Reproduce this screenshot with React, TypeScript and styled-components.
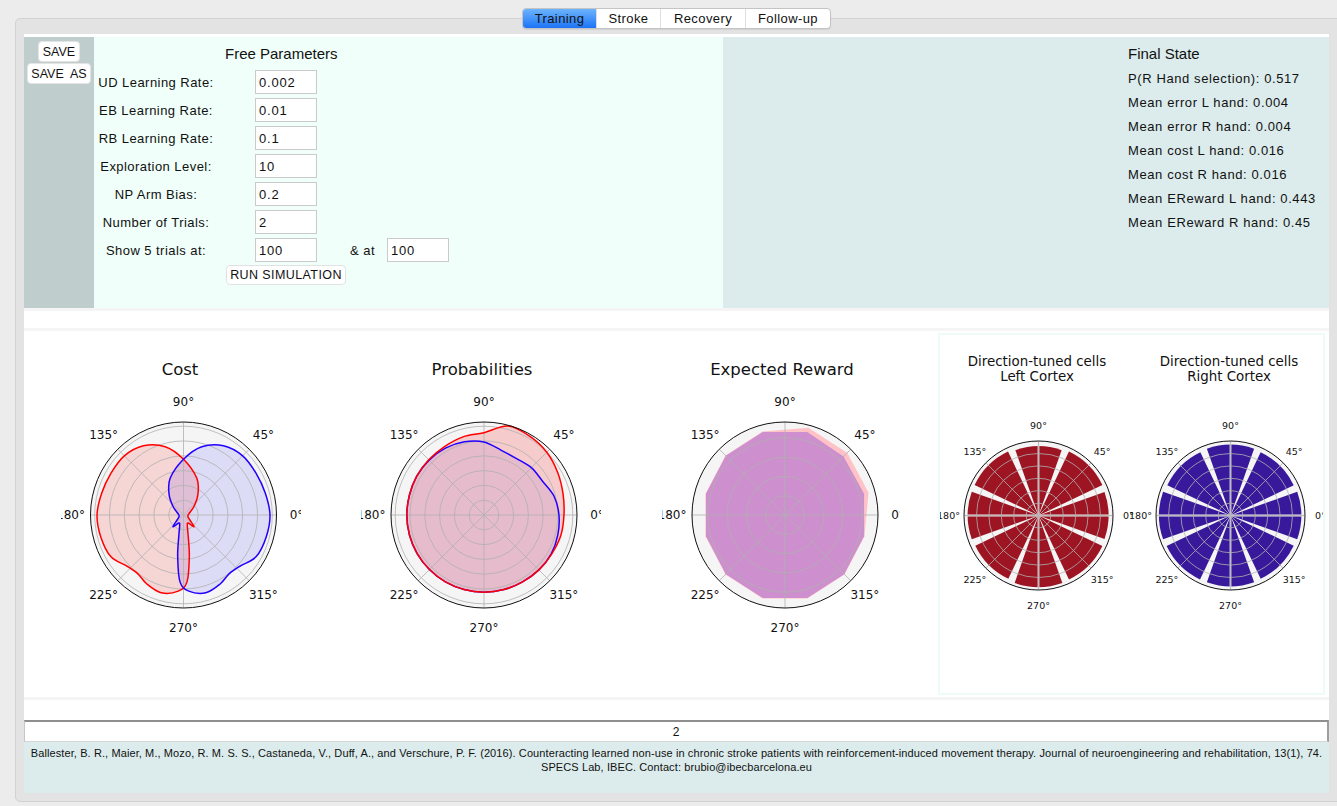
import React from "react";
import styled, { createGlobalStyle, css } from "styled-components";

const GlobalStyle = createGlobalStyle`
  html, body {
    margin: 0;
    padding: 0;
    background: #ececec;
    overflow: hidden;
  }
  body {
    font-family: "Liberation Sans", Arial, sans-serif;
    font-size: 13px;
    color: #111;
  }
  * { box-sizing: border-box; }
`;

const Window = styled.div`
  width: 1337px;
  height: 806px;
  padding-left: 15px;
  display: flex;
  flex-direction: column;
`;

// tab switcher sits over the top border of the pane
const TabBar = styled.div`
  position: relative;
  z-index: 1;
  display: flex;
  justify-content: center;
  width: 1330px;
  padding: 8px 16px 0 9px;
  margin-bottom: -11px;
`;

const Segmented = styled.div`
  display: flex;
  height: 21px;
  border: 1px solid #c4c4c4;
  border-radius: 4px;
  background: #fff;
  overflow: hidden;
  box-shadow: 0 1px 1px rgba(0, 0, 0, 0.08);
`;

const Tab = styled.div<{ $active?: boolean; $w: number }>`
  width: ${(p) => p.$w}px;
  display: flex;
  align-items: center;
  justify-content: center;
  font-size: 13px;
  letter-spacing: 0.4px;
  color: #111;
  border-left: 1px solid #dedede;
  &:first-child {
    border-left: none;
  }
  ${(p) =>
    p.$active &&
    css`
      background: linear-gradient(#6db4fd, #1c74f6);
    `}
`;

const Pane = styled.div`
  width: 1330px;
  background: #e3e3e3;
  border: 1px solid #d2d2d2;
  border-radius: 5px;
  padding: 15px 15px 8px 8px;
`;

const Content = styled.div`
  width: 1305px;
  background: #fff;
  padding-top: 3px;
  display: flex;
  flex-direction: column;
`;

const TopRow = styled.div`
  display: flex;
  height: 274px;
  border-bottom: 3px solid #f5f5f5;
`;

const SideStrip = styled.div`
  width: 70px;
  background: #bfcecd;
  display: flex;
  flex-direction: column;
  align-items: center;
  padding-top: 4px;
  gap: 1px;
`;

const SmallButton = styled.button<{ $w: number }>`
  width: ${(p) => p.$w}px;
  height: 21px;
  padding: 0;
  background: #fff;
  border: 1px solid #e4e4e4;
  border-radius: 4px;
  font-family: "Liberation Sans", Arial, sans-serif;
  font-size: 12.5px;
  color: #111;
`;

const ParamsPanel = styled.div`
  width: 629px;
  background: #f0fff9;
  padding-top: 8px;
`;

const PanelTitle = styled.div<{ $indent: number }>`
  font-size: 15px;
  line-height: 18px;
  margin-left: ${(p) => p.$indent}px;
  color: #111;
`;

const ParamGrid = styled.div`
  display: grid;
  grid-template-columns: 124px 37px 62px 70px 62px;
  grid-auto-rows: 24px;
  row-gap: 4px;
  align-items: center;
  margin-top: 7px;
`;

const ParamLabel = styled.div`
  grid-column: 1;
  text-align: center;
  font-size: 13px;
  letter-spacing: 0.45px;
  white-space: nowrap;
`;

const ParamInput = styled.input<{ $col: number }>`
  grid-column: ${(p) => p.$col};
  width: 62px;
  height: 24px;
  border: 1px solid #cacaca;
  background: #fff;
  padding: 0 3px;
  font-family: "Liberation Sans", Arial, sans-serif;
  font-size: 13px;
  letter-spacing: 0.8px;
  color: #111;
  outline: none;
`;

const AndLabel = styled.div`
  grid-column: 4;
  text-align: right;
  padding-right: 12px;
  font-size: 13px;
  letter-spacing: 0.5px;
`;

const RunButton = styled.button`
  grid-column: 3;
  justify-self: center;
  align-self: start;
  margin-top: -1px;
  width: 120px;
  height: 20px;
  padding: 0;
  white-space: nowrap;
  background: #fff;
  border: 1px solid #e2e2e2;
  border-radius: 4px;
  font-family: "Liberation Sans", Arial, sans-serif;
  font-size: 12.5px;
  letter-spacing: 0.4px;
  color: #111;
`;

const StatePanel = styled.div`
  flex: 1;
  background: #dcecec;
  padding: 8px 0 0 405px;
`;

const StateList = styled.div`
  margin-top: 4px;
`;

const StateLine = styled.div`
  font-size: 13px;
  letter-spacing: 0.6px;
  line-height: 24px;
  white-space: nowrap;
`;

const Spacer = styled.div<{ $h: number }>`
  height: ${(p) => p.$h}px;
`;

const ChartArea = styled.div`
  display: flex;
  align-items: stretch;
  height: 372px;
  padding-left: 7px;
  border-top: 3px solid #f5f5f5;
  border-bottom: 3px solid #f5f5f5;
`;

const ChartCell = styled.div`
  width: 300px;
  display: flex;
  justify-content: center;
  padding-top: 10px;
`;

const CellPanel = styled.div`
  flex: 1;
  margin: 2px 4px 2px 7px;
  border: 2px solid #eefcf7;
  display: flex;
  overflow: hidden;
`;

const PlotSvg = styled.svg<{ $clip?: boolean }>`
  display: block;
  flex: none;
  overflow: ${(p) => (p.$clip ? "hidden" : "visible")};
  font-family: "DejaVu Sans", "Liberation Sans", sans-serif;
`;

const NumberBox = styled.div`
  height: 22px;
  border-top: 2px solid #8e8e8e;
  border-right: 2px solid #9e9e9e;
  border-left: 1px solid #c6c6c6;
  border-bottom: 1px solid #d6d6d6;
  display: flex;
  align-items: center;
  justify-content: center;
  font-size: 12px;
`;

const Citation = styled.div`
  height: 51px;
  background: #dcecec;
  padding-top: 4px;
  text-align: center;
  font-size: 11px;
  letter-spacing: 0.1px;
  line-height: 14px;
  color: #111;
  white-space: nowrap;
`;

/* ---------- polar plot helpers ---------- */

type P = [number, number];

const rad = (d: number) => (d * Math.PI) / 180;
const pt = (cx: number, cy: number, r: number, deg: number): P => [
  cx + r * Math.cos(rad(deg)),
  cy - r * Math.sin(rad(deg)),
];

// closed catmull-rom spline through polar control points
const smoothPath = (cx: number, cy: number, R: number, ctrl: P[]) => {
  const pts = ctrl.map(([a, f]) => pt(cx, cy, f * R, a));
  const n = pts.length;
  let d = `M${pts[0][0].toFixed(2)},${pts[0][1].toFixed(2)}`;
  for (let i = 0; i < n; i++) {
    const p0 = pts[(i - 1 + n) % n];
    const p1 = pts[i];
    const p2 = pts[(i + 1) % n];
    const p3 = pts[(i + 2) % n];
    const c1 = [p1[0] + (p2[0] - p0[0]) / 6, p1[1] + (p2[1] - p0[1]) / 6];
    const c2 = [p2[0] - (p3[0] - p1[0]) / 6, p2[1] - (p3[1] - p1[1]) / 6];
    d += ` C${c1[0].toFixed(2)},${c1[1].toFixed(2)} ${c2[0].toFixed(2)},${c2[1].toFixed(2)} ${p2[0].toFixed(2)},${p2[1].toFixed(2)}`;
  }
  return d + "Z";
};

const polygonPath = (cx: number, cy: number, R: number, ctrl: P[]) =>
  ctrl
    .map(([a, f], i) => {
      const [x, y] = pt(cx, cy, f * R, a);
      return `${i ? "L" : "M"}${x.toFixed(2)},${y.toFixed(2)}`;
    })
    .join(" ") + "Z";

const sectorPath = (cx: number, cy: number, r: number, a1: number, a2: number) => {
  const [x1, y1] = pt(cx, cy, r, a1);
  const [x2, y2] = pt(cx, cy, r, a2);
  return `M${cx},${cy} L${x1.toFixed(2)},${y1.toFixed(2)} A${r},${r} 0 0 0 ${x2.toFixed(2)},${y2.toFixed(2)}Z`;
};

const mirror = (ctrl: P[]): P[] =>
  ctrl
    .map(([a, f]) => [((180 - a) % 360 + 360) % 360, f] as P)
    .sort((p, q) => p[0] - q[0]);

// same angles every 15 degrees, so shared values give the same curve
const every15 = (vals: number[]): P[] => vals.map((f, i) => [i * 15, f]);

const ANGLES = [0, 45, 90, 135, 180, 225, 270, 315];

interface PolarProps {
  w: number;
  h: number;
  cx: number;
  cy: number;
  r: number;
  labelR: number;
  labelSize: number;
  rings: number;
  ringStep: number;
  title: string[];
  titleX: number;
  titleY: number;
  titleSize: number;
  clip?: boolean;
  under?: React.ReactNode;
  over?: React.ReactNode;
}

const PolarPlot = (props: PolarProps) => {
  const { w, h, cx, cy, r, labelR, labelSize, rings, ringStep, title, titleX, titleY, titleSize } = props;
  return (
    <PlotSvg width={w} height={h} viewBox={`0 0 ${w} ${h}`} $clip={props.clip}>
      {title.map((t, i) => (
        <text
          key={t}
          x={titleX}
          y={titleY + i * 15}
          textAnchor="middle"
          fontSize={titleSize}
          fill="#111"
        >
          {t}
        </text>
      ))}
      <circle cx={cx} cy={cy} r={r} fill="#f5f5f5" />
      {props.under}
      {Array.from({ length: rings }, (_, i) => (
        <circle
          key={i}
          cx={cx}
          cy={cy}
          r={(i + 1) * ringStep}
          fill="none"
          stroke="#b0b0b0"
          strokeWidth={0.8}
        />
      ))}
      {ANGLES.map((a) => {
        const [x, y] = pt(cx, cy, r, a);
        return <line key={a} x1={cx} y1={cy} x2={x} y2={y} stroke="#b0b0b0" strokeWidth={0.8} />;
      })}
      {props.over}
      <circle cx={cx} cy={cy} r={r} fill="none" stroke="#111" strokeWidth={1} />
      {ANGLES.map((a) => {
        const [x, y] = pt(cx, cy, labelR, a);
        return (
          <text
            key={a}
            x={x}
            y={y}
            textAnchor="middle"
            dominantBaseline="central"
            fontSize={labelSize}
            fill="#111"
          >
            {a}°
          </text>
        );
      })}
    </PlotSvg>
  );
};

/* ---------- data ---------- */

const costRed: P[] = [
  [0, 0.05], [20, 0.07], [40, 0.15], [55, 0.27], [70, 0.42], [90, 0.6],
  [105, 0.76], [120, 0.86], [135, 0.9], [150, 0.9], [165, 0.91], [180, 0.93],
  [195, 0.92], [210, 0.9], [222, 0.82], [232, 0.8], [242, 0.84], [254, 0.87],
  [266, 0.82], [273, 0.72], [278, 0.45], [283, 0.22], [290, 0.12], [300, 0.1],
  [312, 0.17], [324, 0.08], [342, 0.05],
];
const costBlue = mirror(costRed);

const probRed = every15([
  0.86, 0.88, 0.915, 0.955, 0.98, 0.99, 0.885, 0.87, 0.85, 0.84, 0.835, 0.83,
  0.83, 0.83, 0.83, 0.83, 0.83, 0.83, 0.83, 0.83, 0.83, 0.835, 0.84, 0.855,
]);
const probBlue = every15([
  0.806, 0.78, 0.727, 0.72, 0.7, 0.72, 0.785, 0.815, 0.83, 0.835, 0.835, 0.83,
  0.83, 0.83, 0.83, 0.83, 0.83, 0.83, 0.83, 0.83, 0.83, 0.835, 0.835, 0.822,
]);

const erBlueR = [0.88, 0.89, 0.925, 0.925, 0.9, 0.88, 0.88, 0.9, 0.925, 0.925, 0.9, 0.88];
const erRedR = [0.93, 0.945, 0.97, 0.93, 0.905, 0.885, 0.885, 0.905, 0.93, 0.93, 0.905, 0.885];
const erBlue: P[] = erBlueR.map((f, i) => [15 + i * 30, f]);
const erRed: P[] = erRedR.map((f, i) => [15 + i * 30, f]);

const cellsLeft = [0.94, 0.95, 0.93, 0.95, 0.95, 0.94, 0.96, 0.95];
const cellsRight = [0.95, 0.94, 0.95, 0.94, 0.96, 0.95, 0.95, 0.94];

const params: [string, string][] = [
  ["UD Learning Rate:", "0.002"],
  ["EB Learning Rate:", "0.01"],
  ["RB Learning Rate:", "0.1"],
  ["Exploration Level:", "10"],
  ["NP Arm Bias:", "0.2"],
  ["Number of Trials:", "2"],
];

const finalState = [
  "P(R Hand selection): 0.517",
  "Mean error L hand: 0.004",
  "Mean error R hand: 0.004",
  "Mean cost L hand: 0.016",
  "Mean cost R hand: 0.016",
  "Mean EReward L hand: 0.443",
  "Mean EReward R hand: 0.45",
];

const MAIN = { w: 240, h: 300, cy: 174, r: 93, labelR: 113, labelSize: 12, titleY: 34, titleSize: 16.5 };

const CostChart = () => {
  const cx = 122.5;
  return (
    <PolarPlot
      {...MAIN}
      cx={cx}
      rings={6}
      ringStep={14.8}
      title={["Cost"]}
      titleX={119}
      clip
      under={
        <>
          <path d={smoothPath(cx, MAIN.cy, MAIN.r, costBlue)} fill="rgba(0,0,255,0.1)" />
          <path d={smoothPath(cx, MAIN.cy, MAIN.r, costRed)} fill="rgba(255,0,0,0.13)" />
        </>
      }
      over={
        <>
          <path d={smoothPath(cx, MAIN.cy, MAIN.r, costRed)} fill="none" stroke="#ff0000" strokeWidth={1.5} />
          <path d={smoothPath(cx, MAIN.cy, MAIN.r, costBlue)} fill="none" stroke="#2200ff" strokeWidth={1.5} />
        </>
      }
    />
  );
};

const ProbChart = () => {
  const cx = 123;
  return (
    <PolarPlot
      {...MAIN}
      cx={cx}
      rings={6}
      ringStep={14.8}
      title={["Probabilities"]}
      titleX={121}
      clip
      under={
        <>
          <path d={smoothPath(cx, MAIN.cy, MAIN.r, probBlue)} fill="rgba(0,0,255,0.08)" />
          <path d={smoothPath(cx, MAIN.cy, MAIN.r, probRed)} fill="rgba(255,0,0,0.17)" />
        </>
      }
      over={
        <>
          <path d={smoothPath(cx, MAIN.cy, MAIN.r, probBlue)} fill="none" stroke="#2200ff" strokeWidth={1.5} />
          <path d={smoothPath(cx, MAIN.cy, MAIN.r, probRed)} fill="none" stroke="#ff0000" strokeWidth={1.5} />
        </>
      }
    />
  );
};

const RewardChart = () => {
  const cx = 123;
  return (
    <PolarPlot
      {...MAIN}
      w={238}
      cx={cx}
      rings={4}
      ringStep={19.3}
      title={["Expected Reward"]}
      titleX={120}
      clip
      under={
        <>
          <path d={polygonPath(cx, MAIN.cy, MAIN.r, erRed)} fill="#fec2c7" />
          <path d={polygonPath(cx, MAIN.cy, MAIN.r, erBlue)} fill="#cd8fcd" />
        </>
      }
    />
  );
};

const CellsChart = ({ side, color, radii }: { side: string; color: string; radii: number[] }) => {
  const cx = 98.5;
  const cy = 180.5;
  const r = 74.5;
  return (
    <PolarPlot
      w={192}
      h={358}
      cx={cx}
      cy={cy}
      r={r}
      labelR={90}
      labelSize={9.5}
      rings={5}
      ringStep={12.4}
      title={["Direction-tuned cells", `${side} Cortex`]}
      titleX={97}
      titleY={31}
      titleSize={13.4}
      under={
        <>
          {radii.map((f, i) => (
            <path key={i} d={sectorPath(cx, cy, f * r, i * 45 - 19.5, i * 45 + 19.5)} fill={color} />
          ))}
          <line x1={cx - r} y1={cy} x2={cx + r} y2={cy} stroke="#e8e8e8" strokeWidth={1.8} />
          <line x1={cx} y1={cy - r} x2={cx} y2={cy + r} stroke="#e8e8e8" strokeWidth={1.8} />
        </>
      }
    />
  );
};

export default function App() {
  return (
    <Window>
      <GlobalStyle />
      <TabBar>
        <Segmented>
          <Tab $w={73} $active>
            Training
          </Tab>
          <Tab $w={64}>Stroke</Tab>
          <Tab $w={85}>Recovery</Tab>
          <Tab $w={85}>Follow-up</Tab>
        </Segmented>
      </TabBar>

      <Pane>
        <Content>
          <TopRow>
            {/* save buttons */}
            <SideStrip>
              <SmallButton $w={42}>SAVE</SmallButton>
              <SmallButton $w={64}>SAVE&nbsp; AS</SmallButton>
            </SideStrip>

            {/* parameters form */}
            <ParamsPanel>
              <PanelTitle $indent={131}>Free Parameters</PanelTitle>
              <ParamGrid>
                {params.map(([label, value]) => (
                  <React.Fragment key={label}>
                    <ParamLabel>{label}</ParamLabel>
                    <ParamInput $col={3} defaultValue={value} />
                  </React.Fragment>
                ))}
                <ParamLabel>Show 5 trials at:</ParamLabel>
                <ParamInput $col={3} defaultValue="100" />
                <AndLabel>&amp; at</AndLabel>
                <ParamInput $col={5} defaultValue="100" />
                <RunButton>RUN SIMULATION</RunButton>
              </ParamGrid>
            </ParamsPanel>

            {/* results */}
            <StatePanel>
              <PanelTitle $indent={0}>Final State</PanelTitle>
              <StateList>
                {finalState.map((s) => (
                  <StateLine key={s}>{s}</StateLine>
                ))}
              </StateList>
            </StatePanel>
          </TopRow>

          <Spacer $h={17} />

          <ChartArea>
            <ChartCell>
              <CostChart />
            </ChartCell>
            <ChartCell>
              <ProbChart />
            </ChartCell>
            <ChartCell>
              <RewardChart />
            </ChartCell>
            <CellPanel>
              <CellsChart side="Left" color="#9d1422" radii={cellsLeft} />
              <CellsChart side="Right" color="#38199b" radii={cellsRight} />
            </CellPanel>
          </ChartArea>

          <Spacer $h={20} />

          <NumberBox>2</NumberBox>
          <Citation>
            Ballester, B. R., Maier, M., Mozo, R. M. S. S., Castaneda, V., Duff, A., and Verschure, P. F. (2016).
            Counteracting learned non-use in chronic stroke patients with reinforcement-induced movement therapy.
            Journal of neuroengineering and rehabilitation, 13(1), 74.
            <br />
            SPECS Lab, IBEC. Contact: brubio@ibecbarcelona.eu
          </Citation>
        </Content>
      </Pane>
    </Window>
  );
}
